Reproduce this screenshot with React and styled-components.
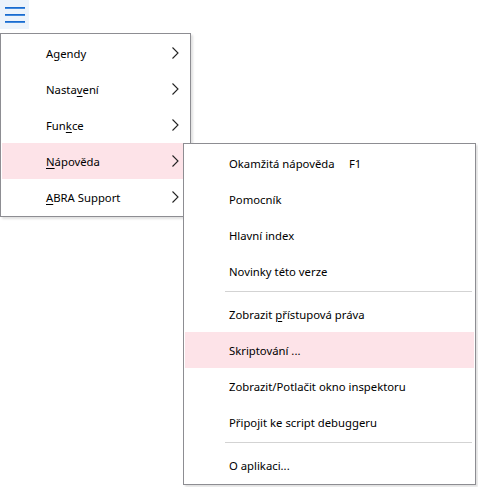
import React from "react";
import styled, { createGlobalStyle } from "styled-components";

const Global = createGlobalStyle`
    body {
        margin: 0;
        background: #fff;
        font-family: "Noto Sans", "Open Sans", sans-serif;
        font-size: 11.3px;
        color: #000;
    }
`

const Page = styled.div`
    width: 478px;
    height: 487px;
    overflow: hidden;
`

const MenuButton = styled.div`
    width: 29px;
    height: 29px;
    background: #ecf3fb;
    display: flex;
    flex-direction: column;
    justify-content: center;
    align-items: center;
    gap: 5px;
`

const Bar = styled.span`
    display: block;
    width: 20px;
    height: 2px;
    background: #1a6bcf;
    border-bottom: 1px solid #4189dc;
    box-sizing: border-box;
`

const MenuArea = styled.div`
    margin-top: 4px;
    position: relative;
`

const Popup = styled.div`
    width: ${p => p.width}px;
    box-sizing: border-box;
    border: 1px solid #8d8d92;
    padding: 1px;
    background: #fff;
    box-shadow: 2px 2px 2px rgba(0, 0, 0, 0.12);
`

const SubPopup = styled(Popup)`
    position: absolute;
    left: 181px;
    top: 0;
    z-index: 2;
`

const Item = styled.div`
    position: relative;
    height: 36px;
    display: flex;
    align-items: center;
    padding: 0 10px 0 44px;
    background: ${p => p.active ? "#fde3e8" : "transparent"};
    white-space: nowrap;
`

const Label = styled.span`
    flex: 1;
    u {
        text-decoration: underline;
        text-underline-offset: 2px;
    }
`

const Shortcut = styled.span`
    position: absolute;
    left: 164px;
`

const Separator = styled.div`
    height: 7px;
    display: flex;
    padding-top: 2px;
    box-sizing: border-box;
    &::after {
        content: "";
        display: block;
        height: 1px;
        flex: 1;
        margin: 0 2px 0 40px;
        background: #d3d3d3;
    }
`

const Chevron = () => (
    <svg width="7" height="12" viewBox="0 0 7 12">
        <polyline points="0.5,0.5 6,6 0.5,11.5" fill="none" stroke="#222" strokeWidth="1.1" />
    </svg>
)

const helpItems = [
    { label: "Okamžitá nápověda", shortcut: "F1" },
    { label: "Pomocník" },
    { label: "Hlavní index" },
    { label: "Novinky této verze" },
    { sep: true },
    { label: <>Zobrazit <u>p</u>řístupová práva</> },
    { label: "Skriptování ...", active: true },
    { label: "Zobrazit/Potlačit okno inspektoru" },
    { label: "Připojit ke script debuggeru" },
    { sep: true },
    { label: "O aplikaci..." },
]

const HelpMenu = () => (
    <SubPopup width={293}>
        {helpItems.map((it, i) => it.sep
            ? <Separator key={i} />
            : <Item key={i} active={it.active}>
                <Label>{it.label}</Label>
                {it.shortcut && <Shortcut>{it.shortcut}</Shortcut>}
            </Item>
        )}
    </SubPopup>
)

const mainItems = [
    <>A<u>g</u>endy</>,
    <>Nasta<u>v</u>ení</>,
    <>Fun<u>k</u>ce</>,
    <><u>N</u>ápověda</>,
    <><u>A</u>BRA Support</>,
]

const App = () => {
    return <Page>
        <Global />
        <MenuButton>
            <Bar />
            <Bar />
            <Bar />
        </MenuButton>
        <MenuArea>
            <Popup width={191}>
                {mainItems.map((label, i) => (
                    <Item key={i} active={i === 3}>
                        <Label>{label}</Label>
                        <Chevron />
                        {i === 3 && <HelpMenu />}
                    </Item>
                ))}
            </Popup>
        </MenuArea>
    </Page>
}

export default App
